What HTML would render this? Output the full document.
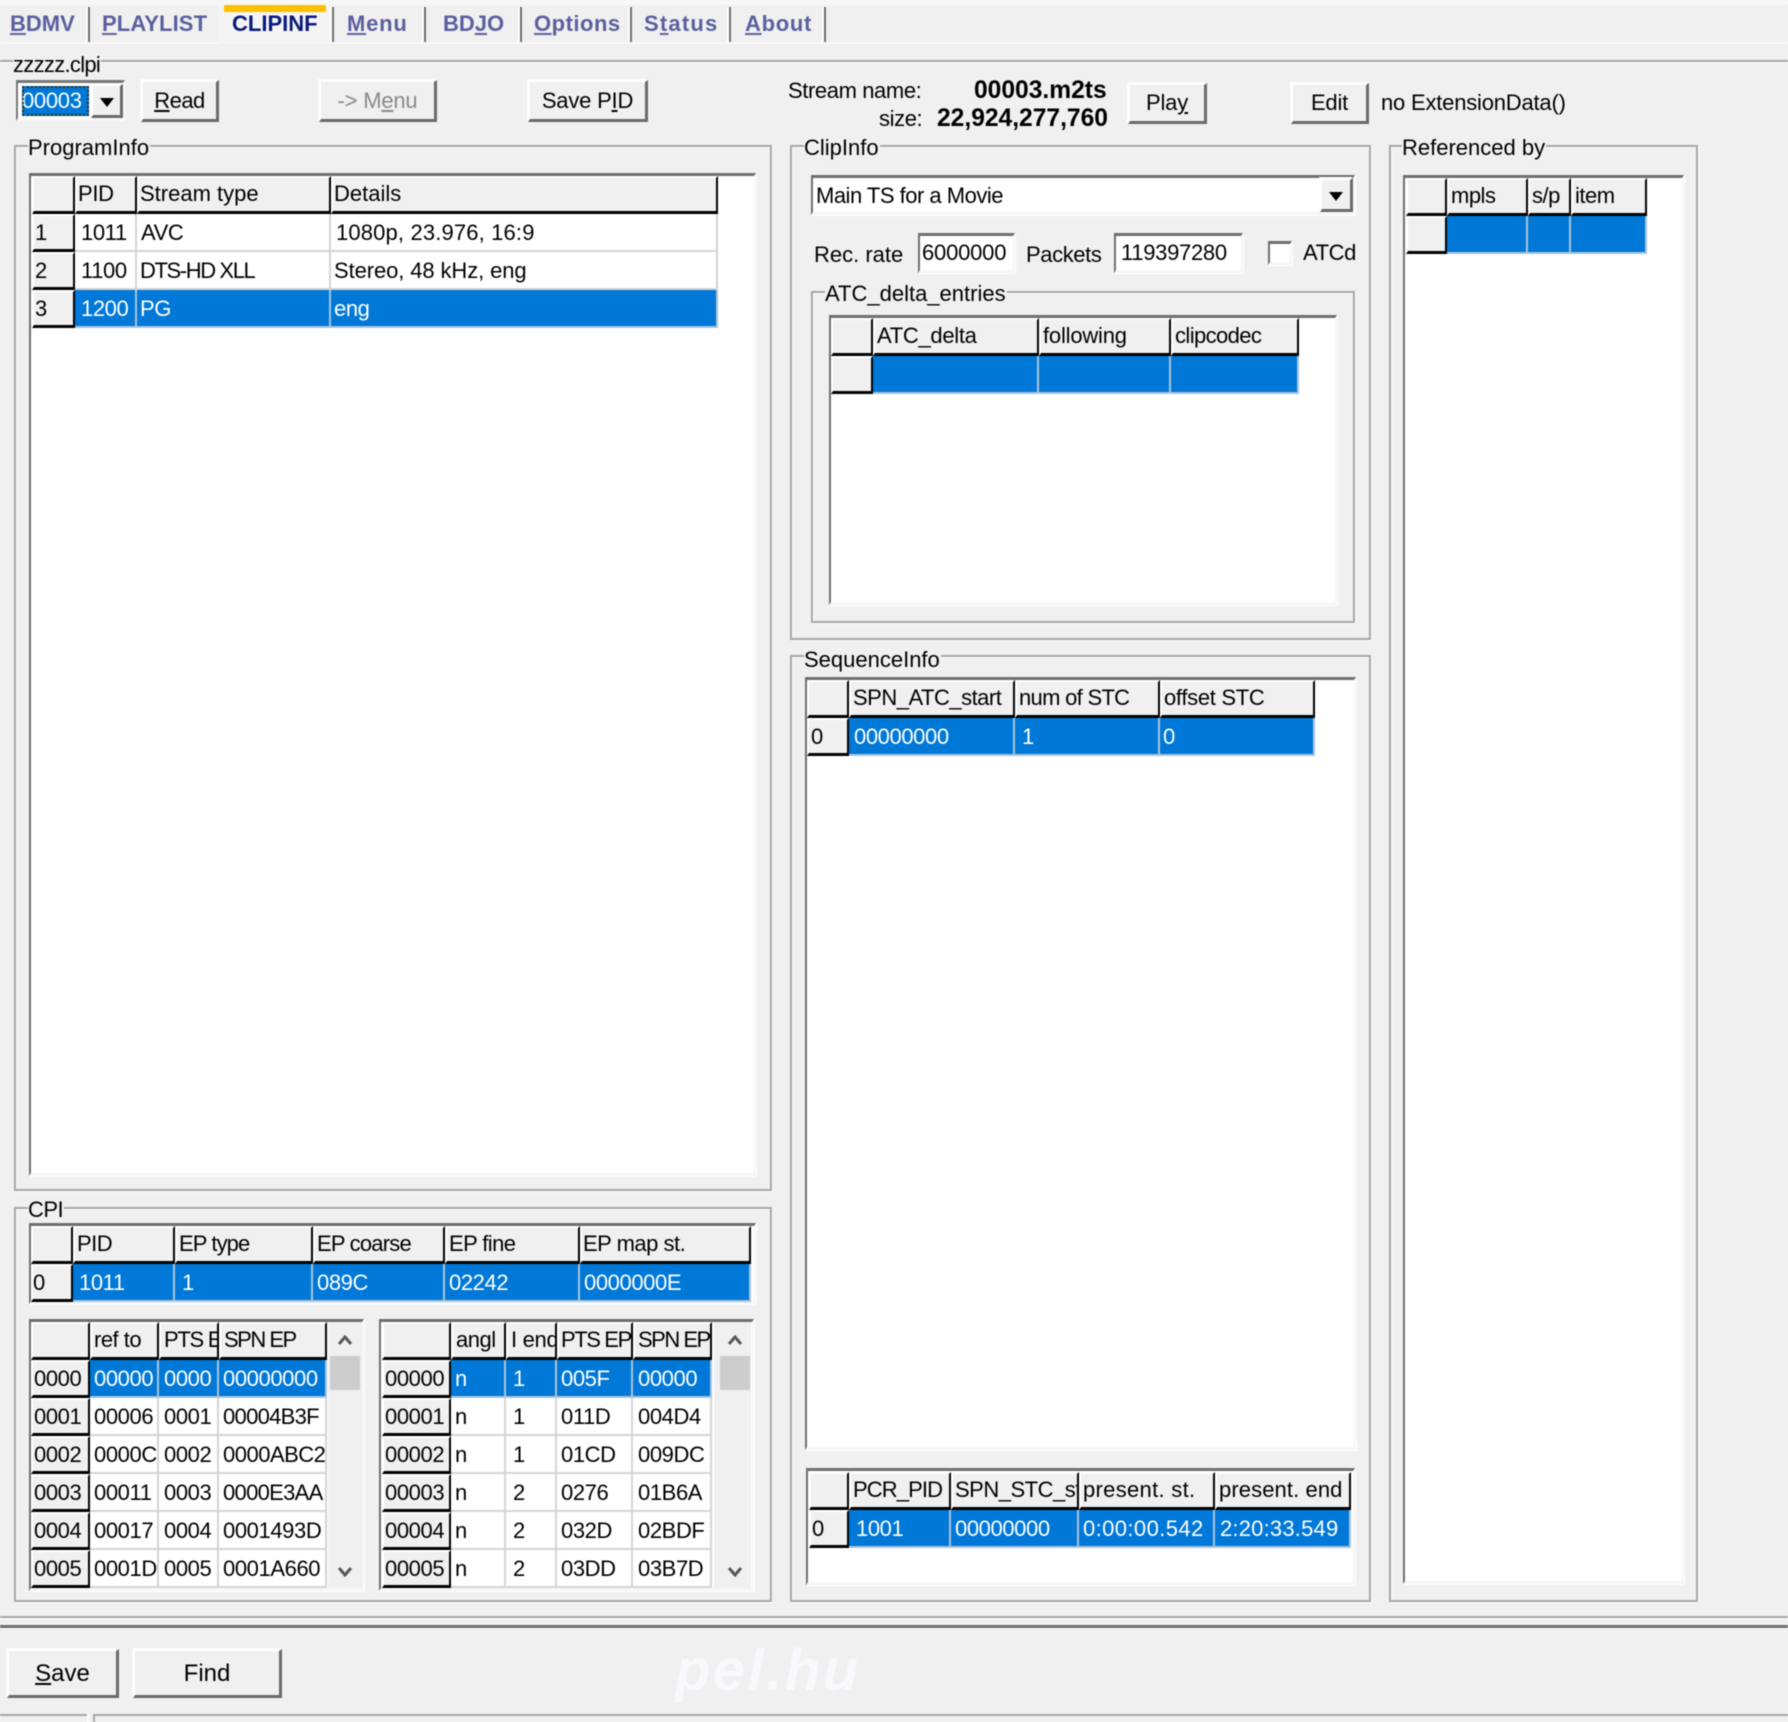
<!DOCTYPE html>
<html><head><meta charset="utf-8"><style>
html,body{margin:0;padding:0;background:#f0f0f0}
#p{position:relative;width:1788px;height:1722px;overflow:hidden;background:#f0f0f0;font:22px/26px "Liberation Sans",sans-serif;color:#000;filter:blur(.4px)}
#p div,#p span.a{position:absolute;box-sizing:border-box}
.t{white-space:pre;height:26px;line-height:26px}
.tab{font-weight:bold;color:#5b5f9e;top:11px}
.sep{top:7px;width:2px;height:35px;background:#707070;box-shadow:-2px 0 0 #fff}
.g{border:2px solid #a6a6a6;box-shadow:1px 1px 0 #fff,inset 1px 1px 0 #fff}
.l{background:#f0f0f0;padding:0 1px 0 0}
.s{background:#fff;border-top:3px solid #6f6f6f;border-left:2px solid #6f6f6f;border-right:2px solid #f6f6f6;border-bottom:3px solid #f6f6f6;box-shadow:1px 1px 0 #fff}
.h{background:#f0f0f0;border-top:2px solid #fff;border-left:2px solid #fff;border-right:2px solid #000;border-bottom:3px solid #000;white-space:pre;overflow:hidden;line-height:32px;padding-left:2px;letter-spacing:-.5px;text-indent:-1px}
.i{background:#f0f0f0;border-top:2px solid #fff;border-left:2px solid #fff;border-right:2px solid #000;border-bottom:3px solid #000;white-space:pre;overflow:hidden;line-height:33px;padding-left:2px;letter-spacing:-.4px;text-indent:-2px}
.c{background:#fff;border-right:2px solid #d4d4d4;border-bottom:2px solid #d4d4d4;white-space:pre;overflow:hidden;line-height:38px;padding-left:2px;letter-spacing:-.4px}
.e{background:#0078d7;color:#fff;border-right:2px solid #a9c4dc;border-bottom:2px solid #a9c4dc;white-space:pre;overflow:hidden;line-height:38px;padding-left:2px;letter-spacing:-.4px}
.b{background:#f0f0f0;border-top:2px solid #fff;border-left:2px solid #fff;border-right:3px solid #6a6a6a;border-bottom:3px solid #6a6a6a;text-align:center;white-space:pre;box-shadow:-1px -1px 0 #fbfbfb;letter-spacing:-.2px}
.ar{width:0;height:0;border-left:7px solid transparent;border-right:7px solid transparent;border-top:9px solid #000}
.th{background:#cdcdcd}
svg{position:absolute}
</style></head><body><div id="p">

<!-- top strip -->
<div style="left:0;top:0;width:1788px;height:5px;background:#f7f7f7"></div>
<div style="left:0;top:42px;width:1788px;height:2px;background:#fafafa"></div>
<div style="left:218px;top:5px;width:114px;height:39px;background:#f4f4f4"></div>
<div style="left:224px;top:5px;width:102px;height:7px;background:#ffc000"></div>

<div class="t tab" style="left:10px"><u>B</u>DMV</div>
<div class="t tab" style="left:102px;letter-spacing:.1px"><u>P</u>LAYLIST</div>
<div class="t tab" style="left:232px;color:#0a1a7a">CLIPINF</div>
<div class="t tab" style="left:347px;letter-spacing:.8px"><u>M</u>enu</div>
<div class="t tab" style="left:443px">BD<u>J</u>O</div>
<div class="t tab" style="left:534px;letter-spacing:.5px"><u>O</u>ptions</div>
<div class="t tab" style="left:644px;letter-spacing:1.2px">S<u>t</u>atus</div>
<div class="t tab" style="left:745px;letter-spacing:.7px"><u>A</u>bout</div>
<div class="sep" style="left:88px"></div>
<div class="sep" style="left:332px"></div>
<div class="sep" style="left:424px"></div>
<div class="sep" style="left:520px"></div>
<div class="sep" style="left:630px"></div>
<div class="sep" style="left:729px"></div>
<div class="sep" style="left:824px"></div>

<!-- main group -->
<div style="left:0;top:60px;width:1788px;height:2px;background:#a6a6a6"></div>
<div style="left:0;top:62px;width:1788px;height:1px;background:#fff"></div>
<div class="t l" style="left:13px;top:52px;letter-spacing:-.7px">zzzzz.clpi</div>

<!-- selector row -->
<div style="left:16px;top:80px;width:109px;height:41px;background:#fff;border-top:3px solid #777;border-left:2px solid #777;border-right:2px solid #f8f8f8;border-bottom:3px solid #f8f8f8"></div>
<div class="t" style="left:22px;top:86px;width:67px;height:30px;line-height:30px;background:#0078d7;color:#fff;outline:2px dotted #3a2a00;outline-offset:-2px;letter-spacing:-.3px">00003</div>
<div class="b" style="left:91px;top:84px;width:32px;height:34px"></div>
<div class="ar" style="left:100px;top:98px"></div>
<div class="b" style="left:141px;top:80px;width:78px;height:42px;line-height:37px;letter-spacing:-.5px"><u>R</u>ead</div>
<div class="b" style="left:319px;top:80px;width:118px;height:42px;line-height:37px;color:#8a8a8a">-&gt; M<u>e</u>nu</div>
<div class="b" style="left:528px;top:80px;width:120px;height:42px;line-height:37px">Save P<u>I</u>D</div>

<div class="t" style="left:788px;top:78px;letter-spacing:-.4px">Stream name:</div>
<div class="t" style="left:974px;top:78px;font-weight:bold;font-size:24.6px">00003.m2ts</div>
<div class="t" style="left:879px;top:106px;letter-spacing:-.4px">size:</div>
<div class="t" style="left:937px;top:106px;font-weight:bold;font-size:24.6px">22,924,277,760</div>
<div class="b" style="left:1128px;top:83px;width:79px;height:41px;line-height:36px">Pla<u>y</u></div>
<div class="b" style="left:1291px;top:83px;width:78px;height:41px;line-height:36px">Edit</div>
<div class="t" style="left:1381px;top:90px;letter-spacing:-.2px">no ExtensionData()</div>

<!-- ProgramInfo -->
<div class="g" style="left:14px;top:145px;width:758px;height:1046px"></div>
<div class="t l" style="left:28px;top:135px">ProgramInfo</div>
<div class="s" style="left:29px;top:173px;width:727px;height:1003px"></div>
<div class="h" style="left:32px;top:176px;width:43px;height:38px"></div>
<div class="h" style="left:75px;top:176px;width:62px;height:38px;letter-spacing:-.3px">PID</div>
<div class="h" style="left:137px;top:176px;width:194px;height:38px;letter-spacing:0">Stream type</div>
<div class="h" style="left:331px;top:176px;width:387px;height:38px;letter-spacing:0">Details</div>
<div class="i" style="left:32px;top:214px;width:43px;height:38px;line-height:34px;padding-left:3px">1</div>
<div class="c" style="left:75px;top:214px;width:62px;height:38px;padding-left:6px">1011</div>
<div class="c" style="left:137px;top:214px;width:194px;height:38px;padding-left:4px">AVC</div>
<div class="c" style="left:331px;top:214px;width:387px;height:38px;padding-left:5px;letter-spacing:.15px">1080p, 23.976, 16:9</div>
<div class="i" style="left:32px;top:252px;width:43px;height:38px;line-height:34px;padding-left:3px">2</div>
<div class="c" style="left:75px;top:252px;width:62px;height:38px;padding-left:6px">1100</div>
<div class="c" style="left:137px;top:252px;width:194px;height:38px;padding-left:3px;letter-spacing:-1.4px">DTS-HD XLL</div>
<div class="c" style="left:331px;top:252px;width:387px;height:38px;padding-left:3px;letter-spacing:-.1px">Stereo, 48 kHz, eng</div>
<div class="i" style="left:32px;top:290px;width:43px;height:38px;line-height:34px;padding-left:3px">3</div>
<div class="e" style="left:75px;top:290px;width:62px;height:38px;padding-left:6px">1200</div>
<div class="e" style="left:137px;top:290px;width:194px;height:38px;padding-left:3px">PG</div>
<div class="e" style="left:331px;top:290px;width:387px;height:38px;padding-left:3px">eng</div>

<!-- CPI -->
<div class="g" style="left:14px;top:1207px;width:758px;height:395px"></div>
<div class="t l" style="left:28px;top:1197px;letter-spacing:-.5px">CPI</div>
<div class="s" style="left:29px;top:1223px;width:727px;height:81px"></div>
<div class="h" style="left:31px;top:1226px;width:42px;height:38px"></div>
<div class="h" style="left:73px;top:1226px;width:102px;height:38px;padding-left:3px">PID</div>
<div class="h" style="left:175px;top:1226px;width:138px;height:38px;padding-left:3px;letter-spacing:-.9px">EP type</div>
<div class="h" style="left:313px;top:1226px;width:132px;height:38px;padding-left:3px;letter-spacing:-.8px">EP coarse</div>
<div class="h" style="left:445px;top:1226px;width:135px;height:38px;padding-left:3px;letter-spacing:-.6px">EP fine</div>
<div class="h" style="left:580px;top:1226px;width:171px;height:38px;padding-left:2px">EP map st.</div>
<div class="i" style="left:31px;top:1264px;width:42px;height:38px;line-height:34px;padding-left:2px">0</div>
<div class="e" style="left:73px;top:1264px;width:102px;height:38px;padding-left:6px">1011</div>
<div class="e" style="left:175px;top:1264px;width:138px;height:38px;padding-left:7px">1</div>
<div class="e" style="left:313px;top:1264px;width:132px;height:38px;padding-left:4px">089C</div>
<div class="e" style="left:445px;top:1264px;width:135px;height:38px;padding-left:4px">02242</div>
<div class="e" style="left:580px;top:1264px;width:171px;height:38px;padding-left:4px">0000000E</div>

<!-- CPI left list -->
<div class="s" style="left:29px;top:1319px;width:335px;height:272px"></div>
<div class="h" style="left:31px;top:1322px;width:59px;height:38px"></div>
<div class="h" style="left:90px;top:1322px;width:69px;height:38px;padding-left:3px">ref to</div>
<div class="h" style="left:159px;top:1322px;width:60px;height:38px;padding-left:4px;letter-spacing:-1.3px">PTS EP</div>
<div class="h" style="left:219px;top:1322px;width:108px;height:38px;padding-left:4px;letter-spacing:-1.5px">SPN EP</div>

<div class="i" style="left:31px;top:1360px;width:59px;height:38px;line-height:34px;padding-left:3px">0000</div>
<div class="e" style="left:90px;top:1360px;width:69px;height:38px;padding-left:4px">00000</div>
<div class="e" style="left:159px;top:1360px;width:60px;height:38px;padding-left:5px">0000</div>
<div class="e" style="left:219px;top:1360px;width:108px;height:38px;padding-left:4px">00000000</div>

<div class="i" style="left:31px;top:1398px;width:59px;height:38px;line-height:34px;padding-left:3px">0001</div>
<div class="c" style="left:90px;top:1398px;width:69px;height:38px;padding-left:4px">00006</div>
<div class="c" style="left:159px;top:1398px;width:60px;height:38px;padding-left:5px">0001</div>
<div class="c" style="left:219px;top:1398px;width:108px;height:38px;padding-left:4px;letter-spacing:-.7px">00004B3F</div>

<div class="i" style="left:31px;top:1436px;width:59px;height:38px;line-height:34px;padding-left:3px">0002</div>
<div class="c" style="left:90px;top:1436px;width:69px;height:38px;padding-left:4px">0000C</div>
<div class="c" style="left:159px;top:1436px;width:60px;height:38px;padding-left:5px">0002</div>
<div class="c" style="left:219px;top:1436px;width:108px;height:38px;padding-left:4px;letter-spacing:-.5px">0000ABC2</div>

<div class="i" style="left:31px;top:1474px;width:59px;height:38px;line-height:34px;padding-left:3px">0003</div>
<div class="c" style="left:90px;top:1474px;width:69px;height:38px;padding-left:4px">00011</div>
<div class="c" style="left:159px;top:1474px;width:60px;height:38px;padding-left:5px">0003</div>
<div class="c" style="left:219px;top:1474px;width:108px;height:38px;padding-left:4px;letter-spacing:-.7px">0000E3AA</div>

<div class="i" style="left:31px;top:1512px;width:59px;height:38px;line-height:34px;padding-left:3px">0004</div>
<div class="c" style="left:90px;top:1512px;width:69px;height:38px;padding-left:4px">00017</div>
<div class="c" style="left:159px;top:1512px;width:60px;height:38px;padding-left:5px">0004</div>
<div class="c" style="left:219px;top:1512px;width:108px;height:38px;padding-left:4px">0001493D</div>

<div class="i" style="left:31px;top:1550px;width:59px;height:38px;line-height:34px;padding-left:3px">0005</div>
<div class="c" style="left:90px;top:1550px;width:69px;height:38px;padding-left:4px">0001D</div>
<div class="c" style="left:159px;top:1550px;width:60px;height:38px;padding-left:5px">0005</div>
<div class="c" style="left:219px;top:1550px;width:108px;height:38px;padding-left:4px">0001A660</div>

<div style="left:328px;top:1322px;width:34px;height:266px;background:#f0f0f0"></div>
<div class="th" style="left:330px;top:1356px;width:30px;height:34px"></div>
<svg style="left:337px;top:1333px" width="16" height="14"><polyline points="2,11 8,4 14,11" fill="none" stroke="#555" stroke-width="3"/></svg>
<svg style="left:337px;top:1565px" width="16" height="14"><polyline points="2,3 8,10 14,3" fill="none" stroke="#555" stroke-width="3"/></svg>

<!-- CPI right list -->
<div class="s" style="left:379px;top:1319px;width:375px;height:272px"></div>
<div class="h" style="left:382px;top:1322px;width:69px;height:38px"></div>
<div class="h" style="left:451px;top:1322px;width:55px;height:38px;padding-left:4px">angl</div>
<div class="h" style="left:506px;top:1322px;width:51px;height:38px;padding-left:4px;letter-spacing:-.3px">I end</div>
<div class="h" style="left:557px;top:1322px;width:76px;height:38px;padding-left:3px;letter-spacing:-1.4px">PTS EP</div>
<div class="h" style="left:633px;top:1322px;width:79px;height:38px;padding-left:4px;letter-spacing:-1.5px">SPN EP</div>

<div class="i" style="left:382px;top:1360px;width:69px;height:38px;line-height:34px;padding-left:3px">00000</div>
<div class="e" style="left:451px;top:1360px;width:55px;height:38px;padding-left:4px">n</div>
<div class="e" style="left:506px;top:1360px;width:51px;height:38px;padding-left:7px">1</div>
<div class="e" style="left:557px;top:1360px;width:76px;height:38px;padding-left:4px">005F</div>
<div class="e" style="left:633px;top:1360px;width:79px;height:38px;padding-left:5px">00000</div>

<div class="i" style="left:382px;top:1398px;width:69px;height:38px;line-height:34px;padding-left:3px">00001</div>
<div class="c" style="left:451px;top:1398px;width:55px;height:38px;padding-left:4px">n</div>
<div class="c" style="left:506px;top:1398px;width:51px;height:38px;padding-left:7px">1</div>
<div class="c" style="left:557px;top:1398px;width:76px;height:38px;padding-left:4px">011D</div>
<div class="c" style="left:633px;top:1398px;width:79px;height:38px;padding-left:5px">004D4</div>

<div class="i" style="left:382px;top:1436px;width:69px;height:38px;line-height:34px;padding-left:3px">00002</div>
<div class="c" style="left:451px;top:1436px;width:55px;height:38px;padding-left:4px">n</div>
<div class="c" style="left:506px;top:1436px;width:51px;height:38px;padding-left:7px">1</div>
<div class="c" style="left:557px;top:1436px;width:76px;height:38px;padding-left:4px">01CD</div>
<div class="c" style="left:633px;top:1436px;width:79px;height:38px;padding-left:5px">009DC</div>

<div class="i" style="left:382px;top:1474px;width:69px;height:38px;line-height:34px;padding-left:3px">00003</div>
<div class="c" style="left:451px;top:1474px;width:55px;height:38px;padding-left:4px">n</div>
<div class="c" style="left:506px;top:1474px;width:51px;height:38px;padding-left:7px">2</div>
<div class="c" style="left:557px;top:1474px;width:76px;height:38px;padding-left:4px">0276</div>
<div class="c" style="left:633px;top:1474px;width:79px;height:38px;padding-left:5px">01B6A</div>

<div class="i" style="left:382px;top:1512px;width:69px;height:38px;line-height:34px;padding-left:3px">00004</div>
<div class="c" style="left:451px;top:1512px;width:55px;height:38px;padding-left:4px">n</div>
<div class="c" style="left:506px;top:1512px;width:51px;height:38px;padding-left:7px">2</div>
<div class="c" style="left:557px;top:1512px;width:76px;height:38px;padding-left:4px">032D</div>
<div class="c" style="left:633px;top:1512px;width:79px;height:38px;padding-left:5px">02BDF</div>

<div class="i" style="left:382px;top:1550px;width:69px;height:38px;line-height:34px;padding-left:3px">00005</div>
<div class="c" style="left:451px;top:1550px;width:55px;height:38px;padding-left:4px">n</div>
<div class="c" style="left:506px;top:1550px;width:51px;height:38px;padding-left:7px">2</div>
<div class="c" style="left:557px;top:1550px;width:76px;height:38px;padding-left:4px">03DD</div>
<div class="c" style="left:633px;top:1550px;width:79px;height:38px;padding-left:5px">03B7D</div>

<div style="left:714px;top:1322px;width:37px;height:266px;background:#f0f0f0"></div>
<div class="th" style="left:720px;top:1356px;width:30px;height:34px"></div>
<svg style="left:727px;top:1333px" width="16" height="14"><polyline points="2,11 8,4 14,11" fill="none" stroke="#555" stroke-width="3"/></svg>
<svg style="left:727px;top:1565px" width="16" height="14"><polyline points="2,3 8,10 14,3" fill="none" stroke="#555" stroke-width="3"/></svg>

<!-- ClipInfo -->
<div class="g" style="left:790px;top:145px;width:581px;height:495px"></div>
<div class="t l" style="left:804px;top:135px">ClipInfo</div>
<div class="s" style="left:811px;top:175px;width:544px;height:40px"></div>
<div class="t" style="left:816px;top:183px;letter-spacing:-.5px">Main TS for a Movie</div>
<div class="b" style="left:1320px;top:178px;width:33px;height:34px"></div>
<div class="ar" style="left:1329px;top:192px"></div>
<div class="t" style="left:814px;top:242px">Rec. rate</div>
<div class="s" style="left:918px;top:233px;width:97px;height:40px"></div>
<div class="t" style="left:922px;top:240px;letter-spacing:-.2px">6000000</div>
<div class="t" style="left:1026px;top:242px;letter-spacing:-.4px">Packets</div>
<div class="s" style="left:1114px;top:233px;width:129px;height:40px"></div>
<div class="t" style="left:1121px;top:240px;letter-spacing:-.3px">119397280</div>
<div class="s" style="left:1268px;top:241px;width:24px;height:24px"></div>
<div class="t" style="left:1303px;top:240px;letter-spacing:-.4px">ATCd</div>

<div class="g" style="left:811px;top:291px;width:544px;height:332px"></div>
<div class="t l" style="left:825px;top:281px">ATC_delta_entries</div>
<div class="s" style="left:829px;top:315px;width:508px;height:290px"></div>
<div class="h" style="left:831px;top:318px;width:42px;height:38px"></div>
<div class="h" style="left:873px;top:318px;width:166px;height:38px;padding-left:3px;letter-spacing:-.3px">ATC_delta</div>
<div class="h" style="left:1039px;top:318px;width:132px;height:38px;padding-left:3px;letter-spacing:-.2px">following</div>
<div class="h" style="left:1171px;top:318px;width:128px;height:38px;padding-left:3px;letter-spacing:-.6px">clipcodec</div>
<div class="i" style="left:831px;top:356px;width:42px;height:38px"></div>
<div class="e" style="left:873px;top:356px;width:166px;height:38px"></div>
<div class="e" style="left:1039px;top:356px;width:132px;height:38px"></div>
<div class="e" style="left:1171px;top:356px;width:128px;height:38px"></div>

<!-- Referenced by -->
<div class="g" style="left:1389px;top:145px;width:309px;height:1457px"></div>
<div class="t l" style="left:1402px;top:135px">Referenced by</div>
<div class="s" style="left:1403px;top:175px;width:281px;height:1409px"></div>
<div class="h" style="left:1406px;top:178px;width:41px;height:38px"></div>
<div class="h" style="left:1447px;top:178px;width:81px;height:38px;padding-left:3px">mpls</div>
<div class="h" style="left:1528px;top:178px;width:43px;height:38px;padding-left:3px">s/p</div>
<div class="h" style="left:1571px;top:178px;width:76px;height:38px;padding-left:3px">item</div>
<div class="i" style="left:1406px;top:216px;width:41px;height:38px"></div>
<div class="e" style="left:1447px;top:216px;width:81px;height:38px"></div>
<div class="e" style="left:1528px;top:216px;width:43px;height:38px"></div>
<div class="e" style="left:1571px;top:216px;width:76px;height:38px"></div>

<!-- SequenceInfo -->
<div class="g" style="left:790px;top:655px;width:581px;height:947px"></div>
<div class="t l" style="left:804px;top:647px">SequenceInfo</div>
<div class="s" style="left:805px;top:677px;width:551px;height:773px"></div>
<div class="h" style="left:807px;top:680px;width:42px;height:38px"></div>
<div class="h" style="left:849px;top:680px;width:166px;height:38px;padding-left:3px">SPN_ATC_start</div>
<div class="h" style="left:1015px;top:680px;width:145px;height:38px;padding-left:3px;letter-spacing:-.7px">num of STC</div>
<div class="h" style="left:1160px;top:680px;width:155px;height:38px;padding-left:3px;letter-spacing:-.3px">offset STC</div>
<div class="i" style="left:807px;top:718px;width:42px;height:38px;line-height:34px;padding-left:2px;text-indent:0">0</div>
<div class="e" style="left:849px;top:718px;width:166px;height:38px;padding-left:5px">00000000</div>
<div class="e" style="left:1015px;top:718px;width:145px;height:38px;padding-left:7px">1</div>
<div class="e" style="left:1160px;top:718px;width:155px;height:38px;padding-left:3px">0</div>

<div class="s" style="left:806px;top:1468px;width:549px;height:117px"></div>
<div class="h" style="left:809px;top:1472px;width:40px;height:38px"></div>
<div class="h" style="left:849px;top:1472px;width:102px;height:38px;padding-left:3px;letter-spacing:-.9px">PCR_PID</div>
<div class="h" style="left:951px;top:1472px;width:128px;height:38px;padding-left:3px;letter-spacing:-.5px">SPN_STC_st</div>
<div class="h" style="left:1079px;top:1472px;width:136px;height:38px;padding-left:2px;letter-spacing:.3px;text-indent:0">present. st.</div>
<div class="h" style="left:1215px;top:1472px;width:136px;height:38px;padding-left:2px;letter-spacing:.1px;text-indent:0">present. end</div>
<div class="i" style="left:809px;top:1510px;width:40px;height:38px;line-height:34px;padding-left:1px;text-indent:0">0</div>
<div class="e" style="left:849px;top:1510px;width:102px;height:38px;padding-left:7px">1001</div>
<div class="e" style="left:951px;top:1510px;width:128px;height:38px;padding-left:4px">00000000</div>
<div class="e" style="left:1079px;top:1510px;width:136px;height:38px;padding-left:4px;letter-spacing:.4px">0:00:00.542</div>
<div class="e" style="left:1215px;top:1510px;width:136px;height:38px;padding-left:5px;letter-spacing:.2px">2:20:33.549</div>

<!-- bottom -->
<div style="left:0;top:1616px;width:1788px;height:2px;background:#a6a6a6"></div>
<div style="left:0;top:1618px;width:1788px;height:1px;background:#fff"></div>
<div style="left:0;top:1625px;width:1788px;height:3px;background:#6f6f6f"></div>
<div style="left:0;top:1628px;width:1788px;height:1px;background:#fff"></div>

<div style="left:675px;top:1636px;font:italic bold 58px/70px 'Liberation Sans',sans-serif;color:#f8f9fc;white-space:pre;letter-spacing:2.5px">pel.hu</div>

<div class="b" style="left:7px;top:1649px;width:112px;height:49px;font-size:24px;line-height:45px;letter-spacing:0"><u>S</u>ave</div>
<div class="b" style="left:133px;top:1649px;width:149px;height:49px;font-size:24px;line-height:45px;letter-spacing:0">Find</div>

<div style="left:0;top:1714px;width:87px;height:2px;background:#a6a6a6"></div>
<div style="left:93px;top:1714px;width:1695px;height:2px;background:#a6a6a6"></div>
<div style="left:93px;top:1714px;width:2px;height:8px;background:#a6a6a6"></div>
<div style="left:87px;top:1714px;width:2px;height:8px;background:#fff"></div>

</div></body></html>
